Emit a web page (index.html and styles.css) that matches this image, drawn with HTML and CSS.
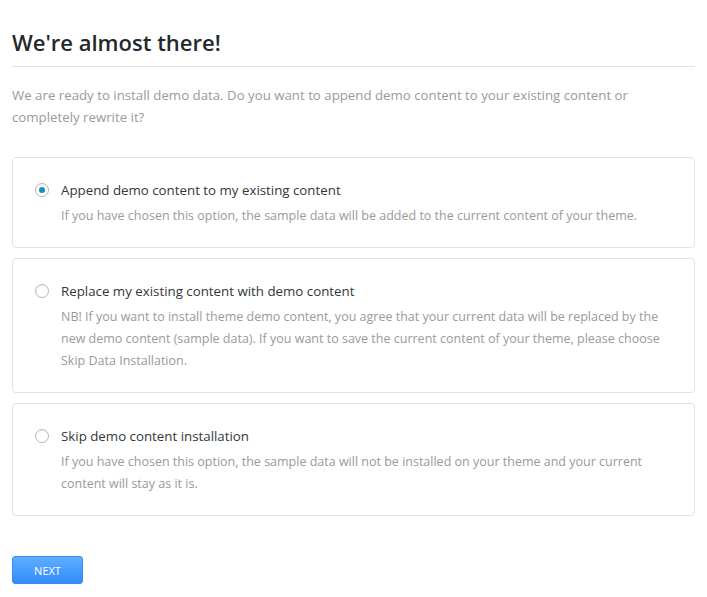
FILE: index.html
```html
<!DOCTYPE html>
<html>
<head>
<meta charset="utf-8">
<link rel="stylesheet" href="styles.css">
</head>
<body>
<div class="wrap">
  <h1 class="title">We're almost there!</h1>
  <p class="intro">We are ready to install demo data. Do you want to append demo content to your existing content or completely rewrite it?</p>

  <label class="card">
    <span class="row"><span class="radio checked"></span><span class="opt">Append demo content to my existing content</span></span>
    <span class="desc">If you have chosen this option, the sample data will be added to the current content of your theme.</span>
  </label>

  <label class="card">
    <span class="row"><span class="radio"></span><span class="opt">Replace my existing content with demo content</span></span>
    <span class="desc">NB! If you want to install theme demo content, you agree that your current data will be replaced by the new demo content (sample data). If you want to save the current content of your theme, please choose Skip Data Installation.</span>
  </label>

  <label class="card">
    <span class="row"><span class="radio"></span><span class="opt">Skip demo content installation</span></span>
    <span class="desc">If you have chosen this option, the sample data will not be installed on your theme and your current content will stay as it is.</span>
  </label>

  <button class="next">NEXT</button>
</div>
</body>
</html>
```

FILE: styles.css
```css
html, body {
  margin: 0;
  padding: 0;
  background: #fff;
}
body {
  font-family: "Open Sans", "Noto Sans", sans-serif;
}
.wrap {
  padding: 27px 12px 0 12px;
  display: flex;
  flex-direction: column;
}
.title {
  margin: 0;
  font-size: 22px;
  line-height: 30px;
  font-weight: 600;
  color: #23282d;
  padding-bottom: 9px;
  border-bottom: 1px solid #e2e2e2;
}
.intro {
  margin: 17px 0 29px 0;
  font-size: 13.25px;
  line-height: 22px;
  color: #9a9a9a;
  max-width: 640px;
}
.card {
  display: flex;
  flex-direction: column;
  border: 1px solid #e3e3e3;
  border-radius: 4px;
  padding: 21px 22px 20px 22px;
  margin-bottom: 10px;
}
.row {
  display: flex;
  align-items: center;
  height: 22px;
}
.radio {
  width: 14px;
  height: 14px;
  border: 1px solid #b4b9be;
  border-radius: 50%;
  box-sizing: border-box;
  margin-right: 12px;
  display: flex;
  align-items: center;
  justify-content: center;
  box-shadow: inset 0 1px 2px rgba(0,0,0,0.08);
  flex-shrink: 0;
}
.radio.checked::after {
  content: "";
  width: 6px;
  height: 6px;
  border-radius: 50%;
  background: #1e8cbe;
}
.opt {
  font-size: 13.3px;
  color: #32373c;
}
.desc {
  margin-top: 4px;
  padding-left: 26px;
  font-size: 12.5px;
  line-height: 22px;
  color: #9a9a9a;
}
.next {
  align-self: flex-start;
  margin-top: 30px;
  width: 71px;
  height: 28px;
  border: 1px solid #3a8ee8;
  border-radius: 3px;
  background: linear-gradient(#5eaeff, #318dfb);
  color: #fff;
  font-family: "Open Sans", sans-serif;
  font-size: 11px;
  padding: 0;
}
```
